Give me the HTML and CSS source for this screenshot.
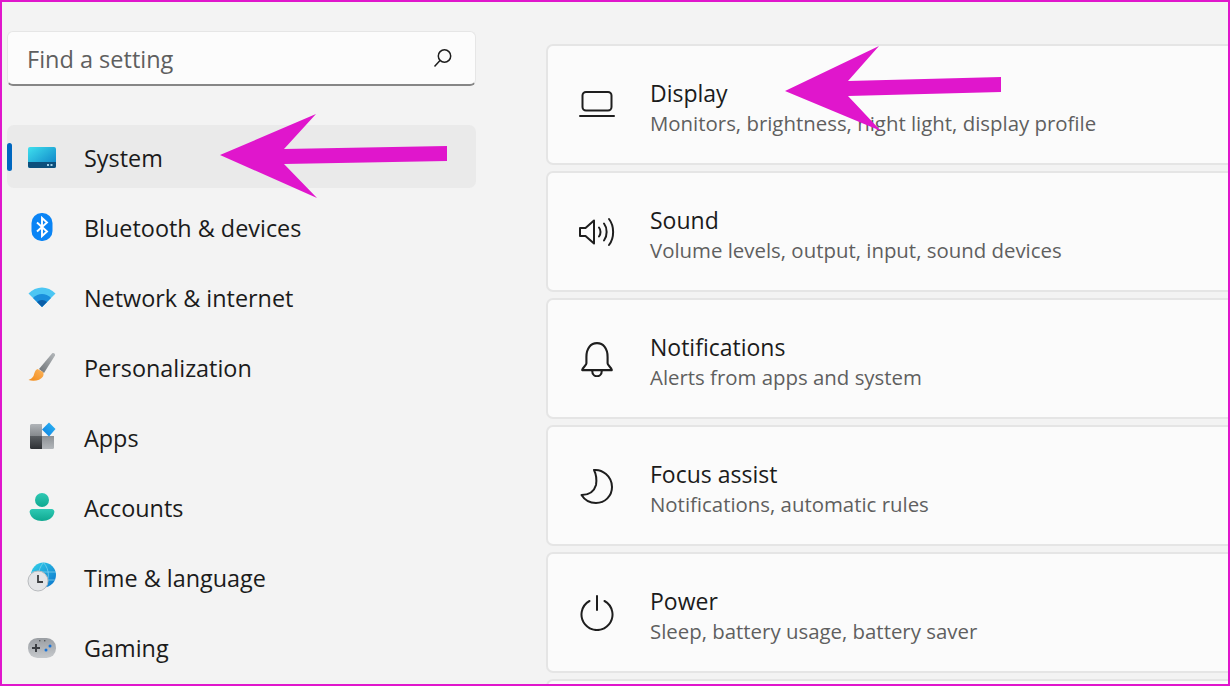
FILE: index.html
```html
<!DOCTYPE html>
<html lang="en">
<head>
<meta charset="utf-8">
<title>Settings</title>
<link rel="stylesheet" href="styles.css">
</head>
<body>
<div class="app">
  <aside class="sidebar">
    <div class="search">
      <span class="search-text">Find a setting</span>
      <svg class="search-icon" viewBox="0 0 20 20"><circle cx="11.5" cy="8" r="6.2"/><path d="M7 12.5 1.5 18.5"/></svg>
    </div>
    <nav class="nav">
      <div class="nav-item active">
        <span class="marker"></span>
        <svg class="nav-icon" viewBox="0 0 30 24"><defs><linearGradient id="sys" x1="0" y1="0" x2="1" y2="1"><stop offset="0" stop-color="#3fe0ee"/><stop offset="1" stop-color="#0a7cc4"/></linearGradient></defs><rect x="1" y="2" width="28" height="21" rx="2" fill="url(#sys)"/><path d="M1 17H29V21a2 2 0 0 1-2 2H3a2 2 0 0 1-2-2Z" fill="#0c4f7c"/><rect x="20" y="19" width="2" height="2" fill="#9fd0e8"/><rect x="23.500" y="19" width="2" height="2" fill="#9fd0e8"/></svg>
        <span class="nav-label">System</span>
      </div>
      <div class="nav-item">
        <svg class="nav-icon" viewBox="0 0 30 30"><rect x="4.500" y="1" width="21" height="28" rx="10" fill="#0a84f5"/><path d="M10 10.500 20 19.500 15 24V6L20 10.500 10 19.500" fill="none" stroke="#fff" stroke-width="1.900"/></svg>
        <span class="nav-label">Bluetooth &amp; devices</span>
      </div>
      <div class="nav-item">
        <svg class="nav-icon" viewBox="0 0 30 24"><path d="M1.500 8.500C9 .5 21 .5 28.500 8.500L15 22Z" fill="#4cc6f3"/><path d="M6 13C11 7.500 19 7.500 24 13L15 22Z" fill="#1a8fdc"/><path d="M10 17C13 14.300 17 14.300 20 17L15 22Z" fill="#0a5ea8"/></svg>
        <span class="nav-label">Network &amp; internet</span>
      </div>
      <div class="nav-item">
        <svg class="nav-icon" viewBox="0 0 30 30"><defs><linearGradient id="brush" x1="0" y1="1" x2="1" y2="0"><stop offset="0" stop-color="#6e7276"/><stop offset="1" stop-color="#b4b8bb"/></linearGradient><linearGradient id="tip" x1="0" y1="1" x2="1" y2="0"><stop offset="0" stop-color="#f28a18"/><stop offset="1" stop-color="#fbb45c"/></linearGradient></defs><path d="M12 17 25 1.500C26.500.5 28.500 1.500 28 3.500L17 21Z" fill="url(#brush)"/><path d="M10.500 17C8 18 7.500 21 6.500 24 5.500 26 3.500 27 1.500 28 7 29.500 13.500 28.500 16 24.500 17 22.500 16.500 21 16 20Z" fill="url(#tip)"/></svg>
        <span class="nav-label">Personalization</span>
      </div>
      <div class="nav-item">
        <svg class="nav-icon" viewBox="0 0 30 30"><defs><linearGradient id="appa" x1="0" y1="0" x2="0" y2="1"><stop offset="0" stop-color="#b0b4b8"/><stop offset="1" stop-color="#85898d"/></linearGradient><linearGradient id="appb" x1="0" y1="0" x2="0" y2="1"><stop offset="0" stop-color="#5a5e62"/><stop offset="1" stop-color="#2e3135"/></linearGradient><linearGradient id="appc" x1="0" y1="0" x2="0" y2="1"><stop offset="0" stop-color="#8d9195"/><stop offset="1" stop-color="#b2b6ba"/></linearGradient><linearGradient id="appd" x1="0" y1="1" x2="1" y2="0"><stop offset="0" stop-color="#0d7fe0"/><stop offset="1" stop-color="#2cb6f4"/></linearGradient></defs><path d="M4.500 2H15V14H3V3.500A1.500 1.500 0 0 1 4.500 2Z" fill="url(#appa)"/><path d="M3 14H15V27H4.500A1.500 1.500 0 0 1 3 25.500Z" fill="url(#appb)"/><path d="M15 14H27V25.500A1.500 1.500 0 0 1 25.500 27H15Z" fill="url(#appc)"/><path d="M22 .5 28.500 7 22 14.500 15 7.500Z" fill="url(#appd)"/></svg>
        <span class="nav-label">Apps</span>
      </div>
      <div class="nav-item">
        <svg class="nav-icon" viewBox="0 0 30 30"><defs><linearGradient id="acc" x1="0" y1="0" x2="0" y2="1"><stop offset="0" stop-color="#2fc9b4"/><stop offset="1" stop-color="#0fa890"/></linearGradient></defs><circle cx="15" cy="8" r="7" fill="url(#acc)"/><path d="M3 21.500A3 3 0 0 1 6 17H24A3 3 0 0 1 27 21.500C26 26 21 29 15 29S4 26 3 21.500Z" fill="url(#acc)"/></svg>
        <span class="nav-label">Accounts</span>
      </div>
      <div class="nav-item">
        <svg class="nav-icon" viewBox="0 0 30 30"><defs><linearGradient id="globe" x1="0" y1="0" x2="1" y2="1"><stop offset="0" stop-color="#34d4ea"/><stop offset="1" stop-color="#0a72cc"/></linearGradient></defs><circle cx="16.500" cy="13" r="12.500" fill="url(#globe)"/><path d="M5 10H29M6 18H28M16.500 .5C10 8 10 18 16.500 25.500M16.500 .5C23 8 23 18 16.500 25.500" fill="none" stroke="#8ad6f0" stroke-width=".7"/><circle cx="11" cy="19" r="10" fill="#e3e5e7" stroke="#b8bbbe" stroke-width="1"/><path d="M11 13V20H16" fill="none" stroke="#3c3f42" stroke-width="1.800"/></svg>
        <span class="nav-label">Time &amp; language</span>
      </div>
      <div class="nav-item">
        <svg class="nav-icon" viewBox="0 0 30 24"><defs><linearGradient id="pad" x1="0" y1="0" x2="0" y2="1"><stop offset="0" stop-color="#9a9ea3"/><stop offset="1" stop-color="#c6c9cc"/></linearGradient></defs><rect x="1" y="3" width="28" height="20" rx="9.500" fill="url(#pad)"/><path d="M5 13H13M9 9V17" stroke="#3b3e42" stroke-width="2"/><circle cx="19" cy="15" r="1.500" fill="#1672d8"/><circle cx="23" cy="11" r="1.500" fill="#1672d8"/><rect x="12" y="5" width="1.400" height="1.400" fill="#55595d"/><rect x="17" y="5" width="1.400" height="1.400" fill="#55595d"/></svg>
        <span class="nav-label">Gaming</span>
      </div>
    </nav>
  </aside>
  <main class="content">
    <section class="card">
      <svg class="card-icon" viewBox="0 0 36 28"><rect x="3.500" y="1" width="29" height="18.500" rx="3.500"/><path d="M1 25H35"/></svg>
      <div class="card-text"><div class="card-title">Display</div><div class="card-sub">Monitors, brightness, night light, display profile</div></div>
    </section>
    <section class="card">
      <svg class="card-icon" viewBox="0 0 36 30"><path d="M1 11V19H6.500L15 26.500V3.500L6.500 11Z"/><path d="M20 10.500C22 13 22 17 20 19.500M25 6.500C28.500 11 28.500 19 25 23.500M30 2C35.500 9 35.500 21 30 28"/></svg>
      <div class="card-text"><div class="card-title">Sound</div><div class="card-sub">Volume levels, output, input, sound devices</div></div>
    </section>
    <section class="card">
      <svg class="card-icon card-icon-tall" viewBox="0 0 32 34"><path d="M6 15C6 7 10 2 16 2S26 7 26 15V21C26 23 29 24 30 27.500H2C3 24 6 23 6 21Z"/><path d="M11.500 28C11.500 35 20.500 35 20.500 28"/></svg>
      <div class="card-text"><div class="card-title">Notifications</div><div class="card-sub">Alerts from apps and system</div></div>
    </section>
    <section class="card">
      <svg class="card-icon card-icon-tall" viewBox="0 0 34 36"><path d="M14 2C22 1 32 8 32 19C32 28 25 35 16 35C9 35 4 31 1.500 27C9 27 14 24 16 17C17 11 16 6 14 2Z"/></svg>
      <div class="card-text"><div class="card-title">Focus assist</div><div class="card-sub">Notifications, automatic rules</div></div>
    </section>
    <section class="card">
      <svg class="card-icon card-icon-tall" viewBox="0 0 34 36"><path d="M17 1V15M9.500 6A15.500 15.500 0 1 0 24.500 6"/></svg>
      <div class="card-text"><div class="card-title">Power</div><div class="card-sub">Sleep, battery usage, battery saver</div></div>
    </section>
    <section class="card"></section>
  </main>
</div>
<svg class="arrow arrow-system" viewBox="0 0 228 84"><path d="M0 41 96 0 64 35 227 32V47L64 50 97 84Z"/></svg>
<svg class="arrow arrow-display" viewBox="0 0 217 86"><path d="M0 46 94 1 63 36 216 32V47L63 51 96 86Z"/></svg>
<div class="frame"></div>
</body>
</html>
```
FILE: styles.css
```css
* { box-sizing: border-box; }
html, body { margin: 0; height: 100%; }
body {
  position: relative;
  width: 1230px;
  height: 686px;
  overflow: hidden;
  background: #f3f3f3;
  font-family: "Open Sans", "Noto Sans", sans-serif;
  color: #1b1b1b;
}
.app {
  display: flex;
  height: 686px;
  overflow: hidden;
}
.sidebar {
  flex: 0 0 546px;
  padding: 31px 70px 0 7px;
}
.search {
  display: flex;
  align-items: center;
  justify-content: space-between;
  height: 55px;
  padding: 2px 22px 0 19px;
  background: #fcfcfc;
  border: 1px solid #e6e6e6;
  border-bottom: 2px solid #868686;
  border-radius: 6px;
}
.search-text { font-size: 23.5px; color: #5f5f5f; }
.search-icon {
  width: 20px;
  height: 20px;
  margin-top: -2px;
  fill: none;
  stroke: #1e1e1e;
  stroke-width: 1.500;
}
.nav {
  display: flex;
  flex-direction: column;
  gap: 7px;
  margin-top: 39px;
}
.nav-item {
  position: relative;
  display: flex;
  align-items: center;
  height: 63px;
  padding-left: 20px;
  gap: 27px;
  border-radius: 7px;
}
.nav-item.active { background: #eaeaea; }
.marker {
  position: absolute;
  left: 0;
  top: 18px;
  width: 5px;
  height: 28px;
  border-radius: 3px;
  background: #0067c0;
}
.nav-icon {
  flex: 0 0 30px;
  width: 30px;
  height: 30px;
}
.nav-label { font-size: 23.4px; padding-top: 2px; }
.content {
  flex: 1 1 auto;
  display: flex;
  flex-direction: column;
  gap: 6px;
  min-width: 0;
  margin-right: -10px;
  padding-top: 44px;
}
.card {
  flex: 0 0 121px;
  display: flex;
  align-items: center;
  gap: 35px;
  padding: 0 0 0 31px;
  background: #fbfbfb;
  border: 2px solid #e5e5e5;
  border-radius: 7px;
}
.card-icon {
  flex: 0 0 36px;
  width: 36px;
  height: 30px;
  fill: none;
  stroke: #1e1e1e;
  stroke-width: 2;
  stroke-linejoin: round;
  stroke-linecap: round;
}
.card-icon-tall { height: 36px; }
.card-text { margin-top: 5px; }
.card-title { font-size: 23px; line-height: 32px; }
.card-sub { font-size: 20.4px; line-height: 28px; color: #5f5f5f; }
.arrow { position: absolute; fill: #e016cc; }
.arrow-system { left: 220px; top: 114px; width: 228px; height: 84px; }
.arrow-display { left: 785px; top: 45px; width: 217px; height: 86px; }
.frame {
  position: absolute;
  inset: 0;
  border: 2px solid #e016cc;
  pointer-events: none;
}
```
